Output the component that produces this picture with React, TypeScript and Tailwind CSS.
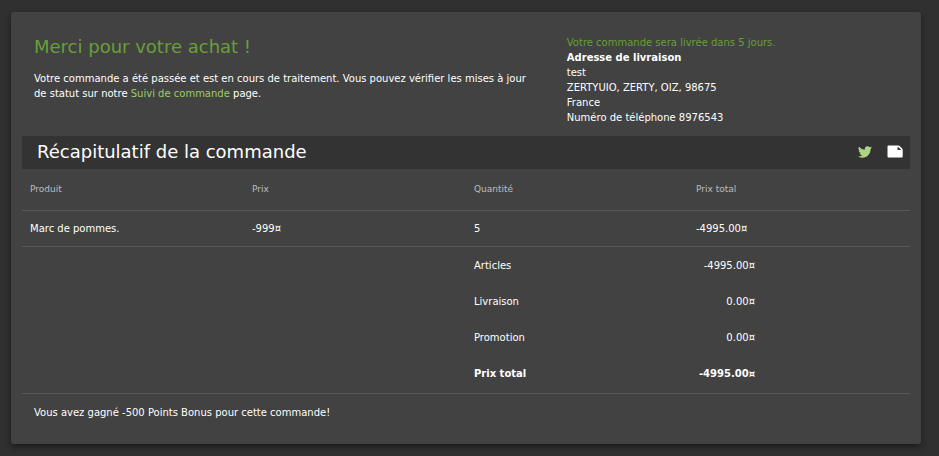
import type { ReactNode } from "react";

const columns = ["Produit", "Prix", "Quantité", "Prix total"];
const items = [{ name: "Marc de pommes.", price: "-999¤", quantity: "5", total: "-4995.00¤" }];
const totals = [
  { label: "Articles", value: "-4995.00¤" },
  { label: "Livraison", value: "0.00¤" },
  { label: "Promotion", value: "0.00¤" },
];

function IconLink({ label, children }: { label: string; children: ReactNode }) {
  return (
    <a href="#" aria-label={label} className="flex w-4 items-center justify-center">
      {children}
    </a>
  );
}

function TwitterIcon() {
  return (
    <svg viewBox="0 0 24 20" className="h-3 w-[14px] fill-[#aed581]" aria-hidden="true">
      <path d="M24 2.4a10 10 0 0 1-2.8.8A5 5 0 0 0 23.3.5a10 10 0 0 1-3.1 1.2A4.9 4.9 0 0 0 11.8 6.2 14 14 0 0 1 1.7 1a4.9 4.9 0 0 0 1.5 6.6A4.9 4.9 0 0 1 1 7v.1a4.9 4.9 0 0 0 3.9 4.8 5 5 0 0 1-2.2.1 4.9 4.9 0 0 0 4.6 3.4A9.9 9.9 0 0 1 0 17.5a14 14 0 0 0 7.5 2.2c9.1 0 14.3-7.7 14-14.6A10 10 0 0 0 24 2.4z" />
    </svg>
  );
}

function NoteIcon() {
  return (
    <svg viewBox="0 0 16 13" className="h-[13px] w-4" aria-hidden="true">
      <path
        fill="#fff"
        d="M1.500.5h10a2 2 0 0 1 1.200.4l2.400 2.600a2 2 0 0 1 .6 1.300V11.500a1 1 0 0 1-1 1h-13.200a1 1 0 0 1-1-1v-10a1 1 0 0 1 1-1z"
      />
      <path fill="#333" d="M10.500 2.200h1.100l2.200 2.300v.5H11a.5.5 0 0 1-.5-.5z" />
    </svg>
  );
}

export default function App() {
  return (
    <div className="min-h-screen bg-[#303030] px-[11px] py-3 font-['DejaVu_Sans',sans-serif] text-[10px] leading-[15px] text-white">
      <main className="mr-[7px] rounded-[3px] bg-[#424242] px-[11px] pb-6 shadow-[0_3px_6px_rgba(0,0,0,0.45)]">
        <section className="grid grid-cols-[3fr_2fr] pt-[23px] pb-[11px]">
          <div className="pr-7 pl-3">
            <h1 className="text-[18px] leading-6 text-[#689f38]">Merci pour votre achat !</h1>
            <p className="mt-3">
              Votre commande a été passée et est en cours de traitement. Vous pouvez vérifier les mises à jour de
              statut sur notre{" "}
              <a href="#" className="text-[#9ccc65]">
                Suivi de commande
              </a>{" "}
              page.
            </p>
          </div>
          <address className="px-3 not-italic">
            <p className="text-[#689f38]">Votre commande sera livrée dans 5 jours.</p>
            <p className="font-bold">Adresse de livraison</p>
            <p>test</p>
            <p>ZERTYUIO, ZERTY, OIZ, 98675</p>
            <p>France</p>
            <p>Numéro de téléphone 8976543</p>
          </address>
        </section>

        <header className="flex h-[33px] items-center justify-between bg-[#333] pr-[7px] pb-0.5 pl-[15px]">
          <h2 className="text-[18px] leading-6">Récapitulatif de la commande</h2>
          <div className="flex gap-[14px]">
            <IconLink label="Twitter">
              <TwitterIcon />
            </IconLink>
            <IconLink label="Note">
              <NoteIcon />
            </IconLink>
          </div>
        </header>

        <table className="w-full table-fixed border-collapse text-left">
          <thead>
            <tr className="h-[41px] border-b border-[#585858]">
              {columns.map((column) => (
                <th key={column} scope="col" className="px-2 text-[9px] font-normal text-[#bdbdbd]">
                  {column}
                </th>
              ))}
            </tr>
          </thead>
          <tbody>
            {items.map((item) => (
              <tr key={item.name} className="h-9 border-b border-[#585858]">
                <td className="px-2">{item.name}</td>
                <td className="px-2">{item.price}</td>
                <td className="px-2">{item.quantity}</td>
                <td className="px-2">{item.total}</td>
              </tr>
            ))}
          </tbody>
        </table>

        <div className="grid grid-cols-2 border-b border-[#585858] py-px">
          <dl className="col-start-2 pl-2">
            {totals.map((total) => (
              <div key={total.label} className="flex h-9 w-[281px] items-center justify-between">
                <dt>{total.label}</dt>
                <dd>{total.value}</dd>
              </div>
            ))}
            <div className="flex h-9 w-[281px] items-center justify-between font-bold">
              <dt>Prix total</dt>
              <dd>-4995.00¤</dd>
            </div>
          </dl>
        </div>

        <p className="px-3 pt-[11px]">Vous avez gagné -500 Points Bonus pour cette commande!</p>
      </main>
    </div>
  );
}
